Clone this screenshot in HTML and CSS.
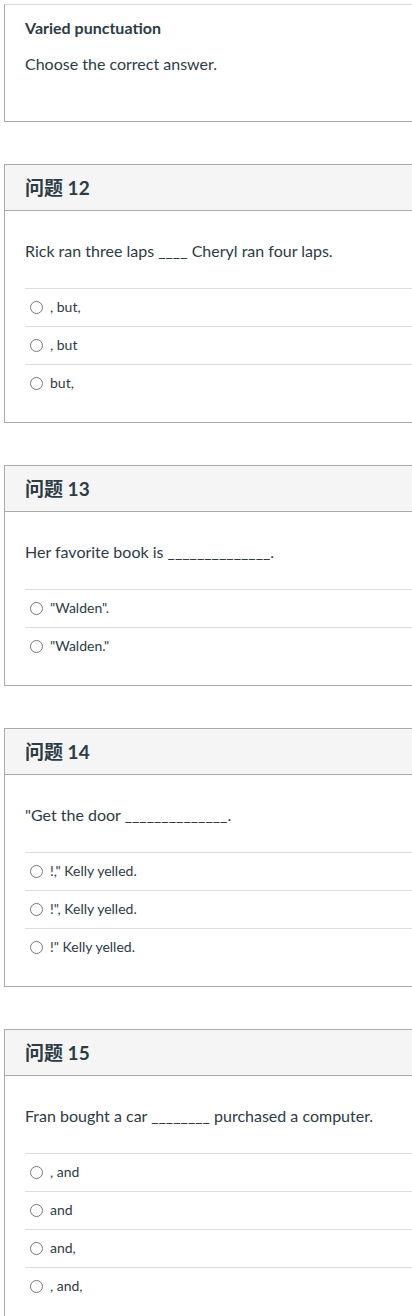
FILE: index.html
```html
<!DOCTYPE html>
<html lang="zh">
<head>
<meta charset="utf-8">
<title>Varied punctuation</title>
<link rel="stylesheet" href="styles.css">
</head>
<body>
<div class="page">
  <section class="intro">
    <h2 class="intro-title">Varied punctuation</h2>
    <p class="intro-text">Choose the correct answer.</p>
  </section>

  <section class="question">
    <div class="q-header">问题 12</div>
    <div class="q-body">
      <p class="q-text">Rick ran three laps ____ Cheryl ran four laps.</p>
      <ul class="answers">
        <li class="answer"><span class="radio"></span><span class="answer-text">, but,</span></li>
        <li class="answer"><span class="radio"></span><span class="answer-text">, but</span></li>
        <li class="answer"><span class="radio"></span><span class="answer-text">but,</span></li>
      </ul>
    </div>
  </section>

  <section class="question">
    <div class="q-header">问题 13</div>
    <div class="q-body">
      <p class="q-text">Her favorite book is ______________.</p>
      <ul class="answers">
        <li class="answer"><span class="radio"></span><span class="answer-text">"Walden".</span></li>
        <li class="answer"><span class="radio"></span><span class="answer-text">"Walden."</span></li>
      </ul>
    </div>
  </section>

  <section class="question">
    <div class="q-header">问题 14</div>
    <div class="q-body">
      <p class="q-text">"Get the door ______________.</p>
      <ul class="answers">
        <li class="answer"><span class="radio"></span><span class="answer-text">!," Kelly yelled.</span></li>
        <li class="answer"><span class="radio"></span><span class="answer-text">!", Kelly yelled.</span></li>
        <li class="answer"><span class="radio"></span><span class="answer-text">!" Kelly yelled.</span></li>
      </ul>
    </div>
  </section>

  <section class="question">
    <div class="q-header">问题 15</div>
    <div class="q-body">
      <p class="q-text">Fran bought a car ________ purchased a computer.</p>
      <ul class="answers">
        <li class="answer"><span class="radio"></span><span class="answer-text">, and</span></li>
        <li class="answer"><span class="radio"></span><span class="answer-text">and</span></li>
        <li class="answer"><span class="radio"></span><span class="answer-text">and,</span></li>
        <li class="answer"><span class="radio"></span><span class="answer-text">, and,</span></li>
      </ul>
    </div>
  </section>
</div>
</body>
</html>
```

FILE: styles.css
```css
html, body {
  margin: 0;
  padding: 0;
  background: #ffffff;
}

body {
  font-family: Lato, "Noto Sans CJK SC", sans-serif;
  color: #2d3b45;
  overflow: hidden;
}

.page {
  padding: 4px 0 40px 4px;
}

.intro {
  border-top: 1px solid #dcdcdc;
  border-left: 1px solid #aaaaaa;
  border-bottom: 1px solid #a6a6a6;
  padding: 13px 20px 47px;
}

.intro-title {
  margin: 0;
  font-size: 16px;
  line-height: 20px;
  font-weight: 700;
}

.intro-text {
  margin: 16px 0 0;
  font-size: 16px;
  line-height: 20px;
}

.question {
  margin-top: 42px;
  border-top: 1px solid #aaaaaa;
  border-left: 1px solid #aaaaaa;
  border-bottom: 1px solid #aaaaaa;
}

.q-header {
  height: 42px;
  padding: 0 20px 3px;
  background: #f5f5f5;
  border-bottom: 1px solid #aaaaaa;
  display: flex;
  align-items: center;
  font-family: Lato, "Noto Sans CJK SC", sans-serif;
  font-size: 19px;
  font-weight: 700;
}

.q-body {
  padding: 0 0 20px 20px;
}

.q-text {
  margin: 30px 0 27px;
  font-size: 16px;
  line-height: 20px;
}

.answers {
  list-style: none;
  margin: 0;
  padding: 0;
}

.answer {
  height: 37px;
  border-top: 1px solid #dddddd;
  display: flex;
  align-items: center;
  font-size: 14px;
}

.answer-text {
  position: relative;
  top: -1px;
}

.radio {
  width: 11px;
  height: 11px;
  border: 1px solid #777777;
  border-radius: 50%;
  background: #ffffff;
  margin: -1px 7px 0 5px;
  flex: none;
}
```
